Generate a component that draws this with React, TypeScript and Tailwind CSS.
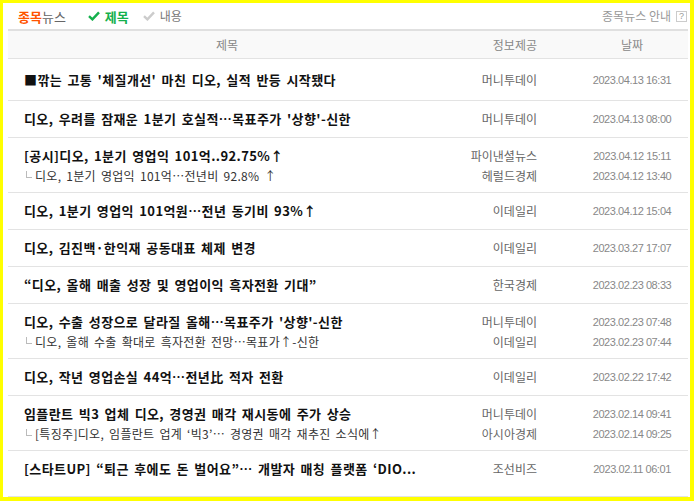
import { Fragment } from "react";

/** One line of a news row: a headline with its source and timestamp. */
interface NewsLine {
  readonly title: string;
  readonly source: string;
  readonly date: string;
}

/** A row: the lead headline plus an optional related (indented) headline. */
interface NewsRow {
  readonly lead: NewsLine;
  readonly related?: NewsLine;
}

const rows: readonly NewsRow[] = [
  {
    lead: {
      title: "■깎는 고통 '체질개선' 마친 디오, 실적 반등 시작됐다",
      source: "머니투데이",
      date: "2023.04.13 16:31",
    },
  },
  {
    lead: {
      title: "디오, 우려를 잠재운 1분기 호실적…목표주가 '상향'-신한",
      source: "머니투데이",
      date: "2023.04.13 08:00",
    },
  },
  {
    lead: {
      title: "[공시]디오, 1분기 영업익 101억..92.75%↑",
      source: "파이낸셜뉴스",
      date: "2023.04.12 15:11",
    },
    related: {
      title: "디오, 1분기 영업익 101억…전년비 92.8% ↑",
      source: "헤럴드경제",
      date: "2023.04.12 13:40",
    },
  },
  {
    lead: {
      title: "디오, 1분기 영업익 101억원…전년 동기비 93%↑",
      source: "이데일리",
      date: "2023.04.12 15:04",
    },
  },
  {
    lead: {
      title: "디오, 김진백·한익재 공동대표 체제 변경",
      source: "이데일리",
      date: "2023.03.27 17:07",
    },
  },
  {
    lead: {
      title: "“디오, 올해 매출 성장 및 영업이익 흑자전환 기대”",
      source: "한국경제",
      date: "2023.02.23 08:33",
    },
  },
  {
    lead: {
      title: "디오, 수출 성장으로 달라질 올해…목표주가 '상향'-신한",
      source: "머니투데이",
      date: "2023.02.23 07:48",
    },
    related: {
      title: "디오, 올해 수출 확대로 흑자전환 전망…목표가↑-신한",
      source: "이데일리",
      date: "2023.02.23 07:44",
    },
  },
  {
    lead: {
      title: "디오, 작년 영업손실 44억…전년比 적자 전환",
      source: "이데일리",
      date: "2023.02.22 17:42",
    },
  },
  {
    lead: {
      title: "임플란트 빅3 업체 디오, 경영권 매각 재시동에 주가 상승",
      source: "머니투데이",
      date: "2023.02.14 09:41",
    },
    related: {
      title: "[특징주]디오, 임플란트 업계 ‘빅3’… 경영권 매각 재추진 소식에↑",
      source: "아시아경제",
      date: "2023.02.14 09:25",
    },
  },
  {
    lead: {
      title: "[스타트UP] “퇴근 후에도 돈 벌어요”… 개발자 매칭 플랫폼 ‘DIO...",
      source: "조선비즈",
      date: "2023.02.11 06:01",
    },
  },
];

function Check({ color }: { color: string }) {
  return (
    <svg width="12" height="10" viewBox="0 0 12 10" aria-hidden>
      <path d="M1 5.2 L4.4 8.4 L11 1.4" fill="none" stroke={color} strokeWidth="2.4" />
    </svg>
  );
}

function Meta({ line }: { line: NewsLine }) {
  return (
    <>
      <span className="w-[130px] shrink-0 pr-[39px] text-right text-[12px] text-[#666]">
        {line.source}
      </span>
      <span className="w-[112px] shrink-0 text-center font-['Liberation_Sans',sans-serif] text-[11px] tracking-[-0.45px] text-[#888]">
        {line.date}
      </span>
    </>
  );
}

export default function App() {
  return (
    <div className="box-border flex h-[501px] w-[694px] flex-col border-t-[3px] border-r-[4px] border-b-[4px] border-l-[3px] border-[#ffff00] bg-white pr-[2px] pl-[5px] font-['Noto_Sans_CJK_KR',sans-serif]">
      {/* tab bar */}
      <div className="flex h-[26px] shrink-0 items-center pr-[1px] pl-[10px]">
        <span className="text-[13px] leading-none">
          <b className="text-[#ff5400]">종목</b>
          <span className="text-[#666]">뉴스</span>
        </span>
        <span className="ml-[22px] flex items-center gap-[5px] text-[13px] leading-none font-bold text-[#14b04c]">
          <Check color="#14b04c" />
          제목
        </span>
        <span className="ml-[14px] flex items-center gap-[5px] text-[12px] leading-none text-[#777]">
          <Check color="#cccccc" />
          내용
        </span>
        <span className="ml-auto flex items-center gap-[5px] text-[12px] leading-none text-[#999]">
          종목뉴스 안내
          <span className="flex h-[11px] w-[11px] items-center justify-center border border-[#ccc] font-['Liberation_Sans',sans-serif] text-[9px] text-[#999]">
            ?
          </span>
        </span>
      </div>

      {/* column header */}
      <div className="flex h-[30px] shrink-0 items-center border-t-2 border-b border-t-[#e0e0e0] border-b-[#e3e3e3] bg-[#f9f9f9] text-[12px] text-[#888]">
        <span className="flex-1 text-center">제목</span>
        <span className="w-[130px] shrink-0 pr-[39px] text-right">정보제공</span>
        <span className="w-[112px] shrink-0 text-center">날짜</span>
      </div>

      {/* rows */}
      <ul className="flex flex-col">
        {rows.map((row, index) => {
          const first = index === 0;
          const last = index === rows.length - 1;
          const padding = first
            ? "pt-[13px] pb-[12px]"
            : last
              ? "pt-[10px] pb-[19px]"
              : row.related
                ? "pt-[10px] pb-[8px]"
                : "py-[10px]";
          return (
            <li key={row.lead.title} className={`flex flex-col border-b border-[#e3e3e3] ${padding}`}>
              <div className="flex h-[16px] items-center leading-[16px]">
                <span className="min-w-0 flex-1 pl-[16px] text-[13px] font-bold tracking-[0.4px] whitespace-nowrap text-[#111] [word-spacing:2px]">
                  {row.lead.title}
                </span>
                <Meta line={row.lead} />
              </div>
              {row.related ? (
                <Fragment>
                  <div className="mt-[4px] flex h-[16px] items-center leading-[16px]">
                    <span className="flex min-w-0 flex-1 items-center pl-[18px] text-[12px] text-[#333]">
                      <span className="mr-[3px] mb-[3px] h-[7px] w-[6px] shrink-0 border-b border-l border-[#bbb]" />
                      <span className="tracking-[0.3px] whitespace-nowrap [word-spacing:2px]">
                        {row.related.title}
                      </span>
                    </span>
                    <Meta line={row.related} />
                  </div>
                </Fragment>
              ) : null}
            </li>
          );
        })}
      </ul>
    </div>
  );
}
